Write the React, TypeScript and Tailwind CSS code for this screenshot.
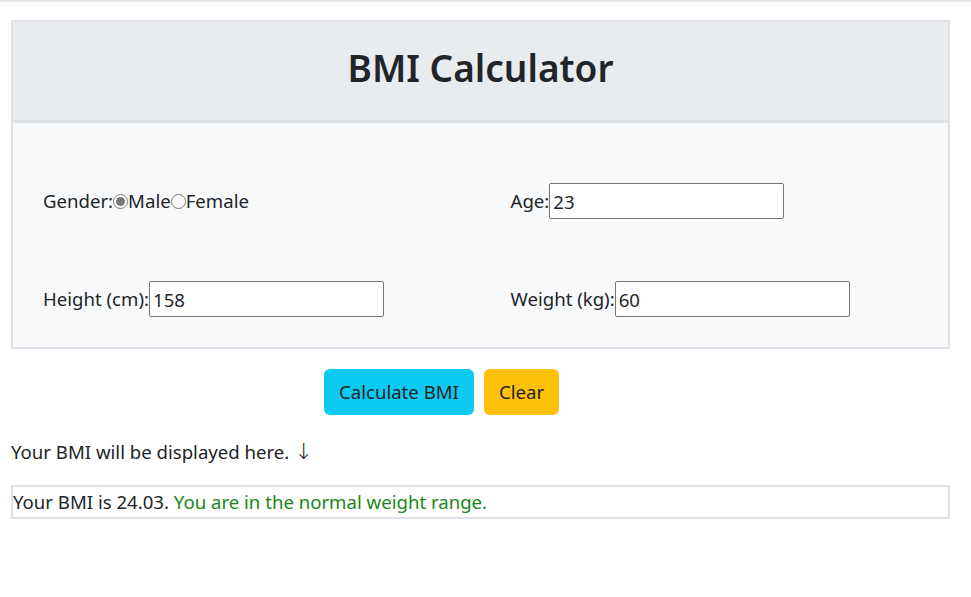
export default function App() {
  return (
    <div className="min-h-[597px] bg-white border-t-2 border-[#e5e5e5] text-[#212529] font-['Noto_Sans',sans-serif] text-[18.6px]">
      <div className="pt-[18px] px-[11px] w-[961px]">
        {/* Card */}
        <div className="border-2 border-[#dee2e6]">
          <div className="bg-[#e9ecef] border-b-[3px] border-[#dee2e6] h-[101px] flex items-center justify-center pb-[8px]">
            <h1 className="text-[37px] font-semibold leading-none">BMI Calculator</h1>
          </div>
          <div className="bg-[#f8f9fa] grid grid-cols-2 pt-[60px] pb-[30px] gap-y-[62px]">
            <div className="flex items-center h-[36px] px-[30px]">
              <span>Gender:</span>
              <input type="radio" name="g" defaultChecked className="w-[15px] h-[15px] m-0 accent-[#777]" />
              <span>Male</span>
              <input type="radio" name="g" className="w-[15px] h-[15px] m-0" />
              <span>Female</span>
            </div>
            <div className="flex items-center h-[36px] px-[30px]">
              <span>Age:</span>
              <input defaultValue="23" className="w-[235px] h-[36px] border border-[#767676] rounded-[2px] bg-white px-[3px] text-[18.6px]" />
            </div>
            <div className="flex items-center h-[36px] px-[30px]">
              <span>Height (cm):</span>
              <input defaultValue="158" className="w-[235px] h-[36px] border border-[#767676] rounded-[2px] bg-white px-[3px] text-[18.6px]" />
            </div>
            <div className="flex items-center h-[36px] px-[30px]">
              <span>Weight (kg):</span>
              <input defaultValue="60" className="w-[235px] h-[36px] border border-[#767676] rounded-[2px] bg-white px-[3px] text-[18.6px]" />
            </div>
          </div>
        </div>

        {/* Buttons */}
        <div className="flex gap-[10px] mt-[20px] ml-[313px]">
          <button className="h-[46px] px-[15px] bg-[#0dcaf0] rounded-[6px]">Calculate BMI</button>
          <button className="h-[46px] px-[15px] bg-[#ffc107] rounded-[6px]">Clear</button>
        </div>

        <p className="mt-[23px] h-[28px] leading-[28px]">
          Your BMI will be displayed here. <span className="text-[22px] leading-none text-[#212529] font-['DejaVu_Sans',sans-serif] font-light">↓</span>
        </p>

        <div className="mt-[19px] border-2 border-[#dee2e6] h-[34px] flex items-center">
          <span>Your BMI is 24.03.&nbsp;</span>
          <span className="text-[#198719]">You are in the normal weight range.</span>
        </div>
      </div>
    </div>
  )
}
